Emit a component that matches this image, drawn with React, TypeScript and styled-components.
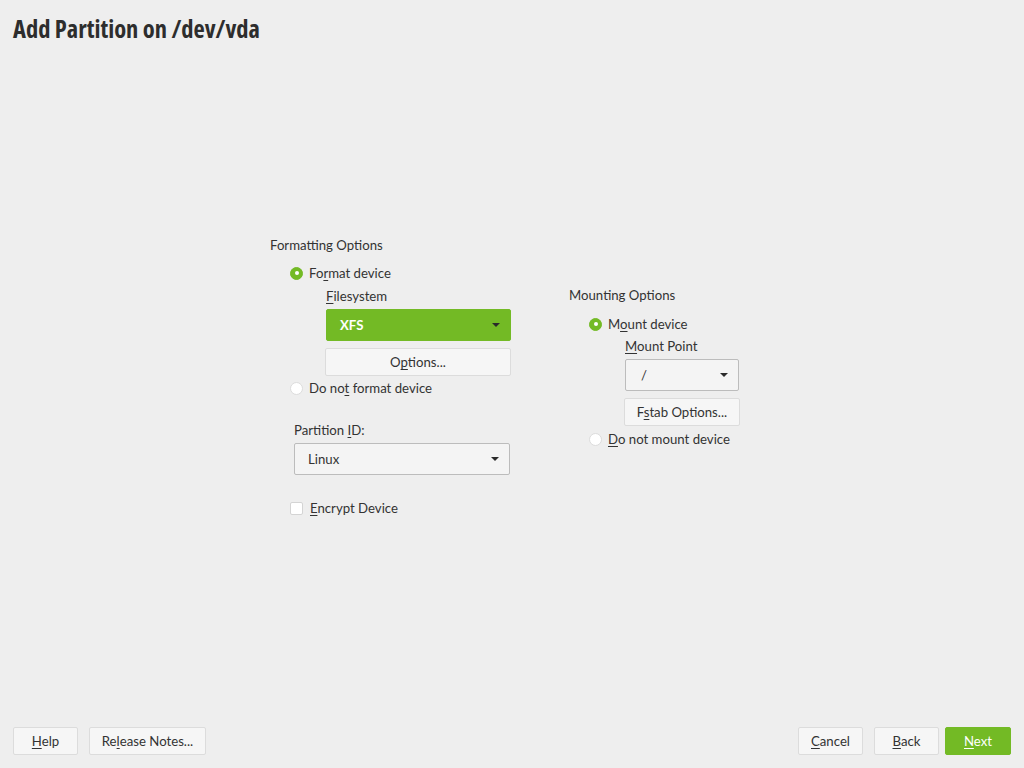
import React from "react";
import styled, { createGlobalStyle } from "styled-components";

const GREEN = "#73ba25";

const Global = createGlobalStyle`
  html, body { margin: 0; padding: 0; background: #eeeeee; }
  body { font-family: Lato, "Liberation Sans", sans-serif; color: #333; font-size: 13.2px; }
  * { box-sizing: border-box; }
`;

const Page = styled.div`
  width: 1024px;
  height: 768px;
  display: flex;
  flex-direction: column;
  background: #eeeeee;
`;

const Header = styled.header`
  padding: 14px 13px 0;
  height: 44px;
`;

const Title = styled.h1`
  margin: 0;
  font-family: "Open Sans", "Roboto", sans-serif;
  font-stretch: 75%;
  font-weight: 700;
  font-size: 24.5px;
  line-height: 30px;
  color: #2d2d2d;
`;

const Main = styled.main`
  flex: 1;
  display: flex;
  padding: 191px 0 0 270px;
  gap: 58px;
`;

const Column = styled.div<{ $top?: number; $width: number }>`
  display: flex;
  flex-direction: column;
  margin-top: ${(p) => p.$top ?? 0}px;
  width: ${(p) => p.$width}px;
`;

const Section = styled.div`
  line-height: 20px;
  height: 20px;
`;

const Row = styled.label<{ $indent: number; $mt?: number }>`
  display: flex;
  align-items: center;
  gap: 6px;
  height: 20px;
  margin-left: ${(p) => p.$indent}px;
  margin-top: ${(p) => p.$mt ?? 0}px;
`;

const Radio = styled.span<{ $on?: boolean }>`
  width: 13px;
  height: 13px;
  border-radius: 50%;
  flex: none;
  display: flex;
  align-items: center;
  justify-content: center;
  background: ${(p) => (p.$on ? GREEN : "#fff")};
  border: 1px solid ${(p) => (p.$on ? GREEN : "#dcdcdc")};
  &::after {
    content: "";
    display: ${(p) => (p.$on ? "block" : "none")};
    width: 4px;
    height: 4px;
    border-radius: 50%;
    background: #fff;
  }
`;

const Check = styled.span`
  width: 13px;
  height: 13px;
  flex: none;
  border-radius: 2px;
  background: #fff;
  border: 1px solid #d4d4d4;
  margin-right: 1px;
`;

const Label = styled.div<{ $indent: number; $mt?: number }>`
  margin-left: ${(p) => p.$indent}px;
  margin-top: ${(p) => p.$mt ?? 0}px;
  height: 20px;
  line-height: 20px;
`;

const Combo = styled.div<{ $indent: number; $width: number; $green?: boolean; $mt?: number; $pl?: number }>`
  margin-left: ${(p) => p.$indent}px;
  margin-top: ${(p) => p.$mt ?? 3}px;
  width: ${(p) => p.$width}px;
  height: 32px;
  display: flex;
  align-items: center;
  justify-content: space-between;
  padding: 0 10px 0 ${(p) => p.$pl ?? 13}px;
  border-radius: 2px;
  background: ${(p) => (p.$green ? GREEN : "#f4f4f4")};
  border: 1px solid ${(p) => (p.$green ? GREEN : "#bcbcbc")};
  color: ${(p) => (p.$green ? "#fff" : "#333")};
  font-weight: ${(p) => (p.$green ? 700 : 400)};
`;

const Arrow = styled.span`
  width: 0;
  height: 0;
  border-left: 4px solid transparent;
  border-right: 4px solid transparent;
  border-top: 4px solid #2a2a2a;
`;

const Button = styled.button<{ $width: number; $indent?: number; $mt?: number; $primary?: boolean }>`
  width: ${(p) => p.$width}px;
  height: 28px;
  margin-left: ${(p) => p.$indent ?? 0}px;
  margin-top: ${(p) => p.$mt ?? 0}px;
  padding: 0;
  font-family: inherit;
  font-size: 13.2px;
  color: ${(p) => (p.$primary ? "#fff" : "#333")};
  background: ${(p) => (p.$primary ? GREEN : "#f6f6f6")};
  border: 1px solid ${(p) => (p.$primary ? GREEN : "#dcdcdc")};
  border-radius: 2px;
  display: flex;
  align-items: center;
  justify-content: center;
`;

const Footer = styled.footer`
  display: flex;
  justify-content: space-between;
  align-items: flex-end;
  padding: 0 13px 13px;
`;

const ButtonGroup = styled.div<{ $gap: number }>`
  display: flex;
  gap: ${(p) => p.$gap}px;
`;

const U = styled.span`
  text-decoration: underline;
  text-underline-offset: 2px;
`;

export default function App() {
  return (
    <Page>
      <Global />
      <Header>
        <Title>Add Partition on /dev/vda</Title>
      </Header>
      <Main>
        <Column $width={241}>
          <Section>Formatting Options</Section>
          <Row $indent={20} $mt={8}>
            <Radio $on />
            <span>Fo<U>r</U>mat device</span>
          </Row>
          <Label $indent={56} $mt={3}><U>F</U>ilesystem</Label>
          <Combo $indent={56} $width={185} $green>
            <span>XFS</span>
            <Arrow />
          </Combo>
          <Button $width={186} $indent={55} $mt={7}>
            <span>O<U>p</U>tions...</span>
          </Button>
          <Row $indent={20} $mt={2}>
            <Radio />
            <span>Do no<U>t</U> format device</span>
          </Row>
          <Label $indent={24} $mt={22}>Partition <U>I</U>D:</Label>
          <Combo $indent={24} $width={216}>
            <span>Linux</span>
            <Arrow />
          </Combo>
          <Row $indent={20} $mt={23}>
            <Check />
            <span><U>E</U>ncrypt Device</span>
          </Row>
        </Column>
        <Column $width={172} $top={50}>
          <Section>Mounting Options</Section>
          <Row $indent={20} $mt={9}>
            <Radio $on />
            <span>M<U>o</U>unt device</span>
          </Row>
          <Label $indent={56} $mt={2}><U>M</U>ount Point</Label>
          <Combo $indent={56} $width={114} $pl={15}>
            <span>/</span>
            <Arrow />
          </Combo>
          <Button $width={116} $indent={55} $mt={7}>
            <span>F<U>s</U>tab Options...</span>
          </Button>
          <Row $indent={20} $mt={3}>
            <Radio />
            <span><U>D</U>o not mount device</span>
          </Row>
        </Column>
      </Main>
      <Footer>
        <ButtonGroup $gap={11}>
          <Button $width={65}><span><U>H</U>elp</span></Button>
          <Button $width={117}><span>Re<U>l</U>ease Notes...</span></Button>
        </ButtonGroup>
        <ButtonGroup $gap={11}>
          <Button $width={65}><span><U>C</U>ancel</span></Button>
          <ButtonGroup $gap={6}>
            <Button $width={65}><span><U>B</U>ack</span></Button>
            <Button $width={66} $primary><span><U>N</U>ext</span></Button>
          </ButtonGroup>
        </ButtonGroup>
      </Footer>
    </Page>
  );
}
